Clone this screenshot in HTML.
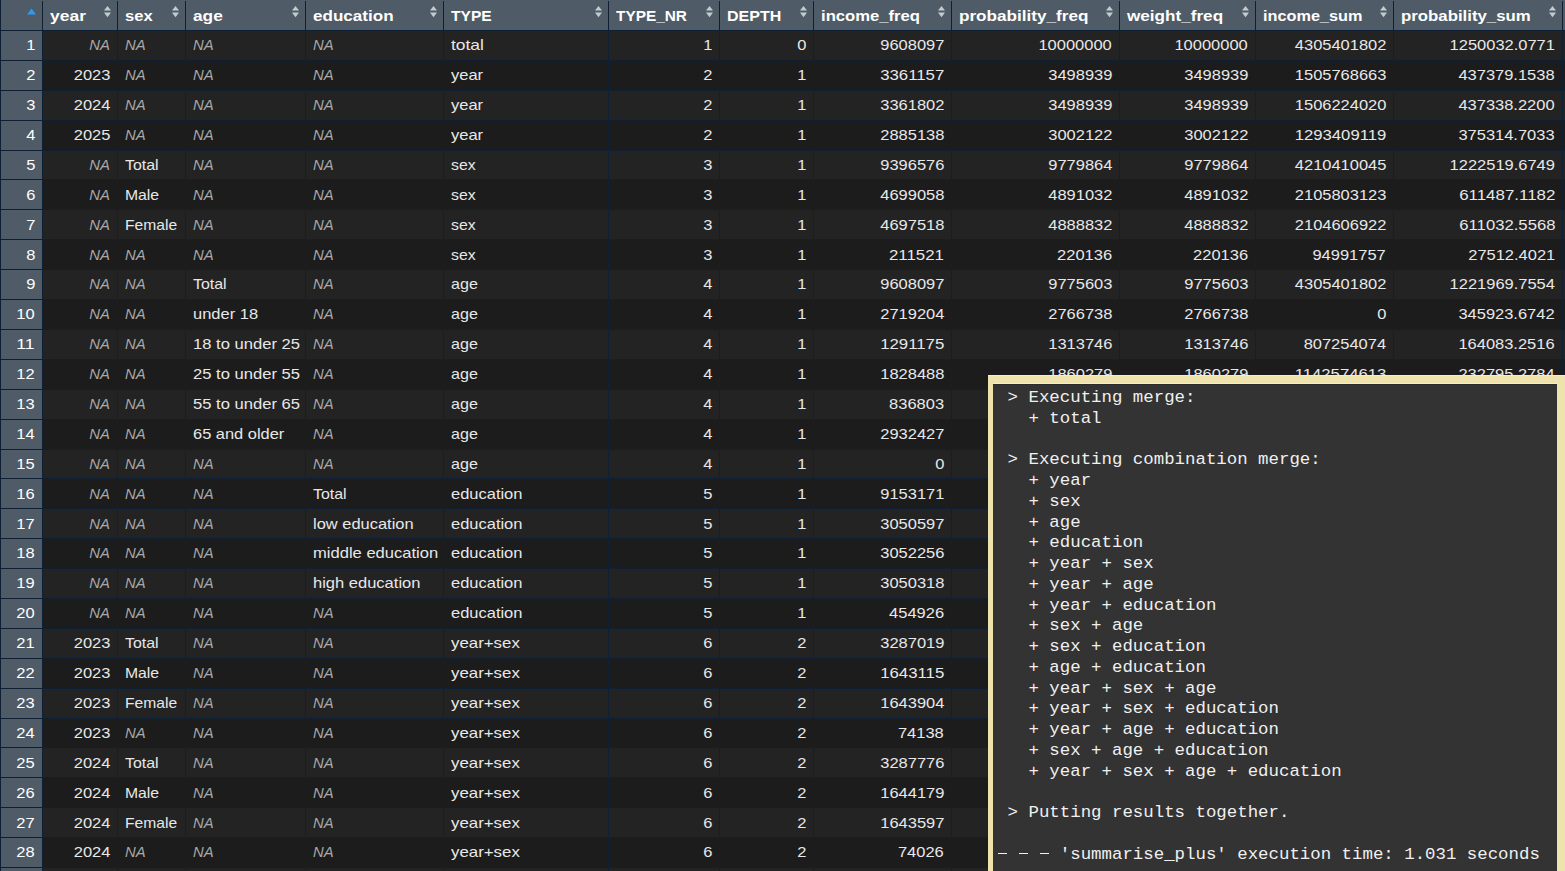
<!DOCTYPE html><html><head><meta charset='utf-8'><style>
*{margin:0;padding:0;box-sizing:border-box}
html,body{width:1565px;height:871px;overflow:hidden;background:#0f2035;}
body{position:relative;font-family:"Liberation Sans", sans-serif;}
.r{position:absolute;}
.t{position:absolute;white-space:pre;line-height:1;font-size:15.0px;color:#e8e8e8;}
.h{position:absolute;white-space:pre;line-height:1;font-size:15.0px;font-weight:bold;color:#ffffff;}
.na{font-style:italic;color:#a8a8a8;}
.rn{position:absolute;white-space:pre;line-height:1;font-size:15.0px;color:#ffffff;}
.con{position:absolute;left:988px;top:375px;width:577px;height:496px;background:#efe3ad;}
.cin{position:absolute;left:5px;top:9px;right:8px;bottom:0;background:#333333;}
.cl{position:absolute;white-space:pre;font-family:"Liberation Mono", monospace;font-size:17.4px;line-height:1;color:#f0f0f0;}
</style></head><body>
<div class='r' style='left:0;top:0;width:1565px;height:30px;background:#4f5b66'></div>
<div class='r' style='left:1px;top:0;width:41px;height:30px;background:#4f5b66'></div>
<div class='r' style='left:43px;top:0;width:74px;height:30px;background:#4f5b66'></div>
<div class='r' style='left:118px;top:0;width:67px;height:30px;background:#4f5b66'></div>
<div class='r' style='left:186px;top:0;width:119px;height:30px;background:#4f5b66'></div>
<div class='r' style='left:306px;top:0;width:137px;height:30px;background:#4f5b66'></div>
<div class='r' style='left:444px;top:0;width:164px;height:30px;background:#4f5b66'></div>
<div class='r' style='left:609px;top:0;width:110px;height:30px;background:#4f5b66'></div>
<div class='r' style='left:720px;top:0;width:93px;height:30px;background:#4f5b66'></div>
<div class='r' style='left:814px;top:0;width:137px;height:30px;background:#4f5b66'></div>
<div class='r' style='left:952px;top:0;width:167px;height:30px;background:#4f5b66'></div>
<div class='r' style='left:1120px;top:0;width:135px;height:30px;background:#4f5b66'></div>
<div class='r' style='left:1256px;top:0;width:137px;height:30px;background:#4f5b66'></div>
<div class='r' style='left:1394px;top:0;width:168px;height:30px;background:#4f5b66'></div>
<div class='r' style='left:1563px;top:0;width:137px;height:30px;background:#4f5b66'></div>
<div class='r' style='left:42px;top:1px;width:1px;height:29px;background:#0f2035'></div>
<div class='r' style='left:117px;top:1px;width:1px;height:29px;background:#0f2035'></div>
<div class='r' style='left:185px;top:1px;width:1px;height:29px;background:#0f2035'></div>
<div class='r' style='left:305px;top:1px;width:1px;height:29px;background:#0f2035'></div>
<div class='r' style='left:443px;top:1px;width:1px;height:29px;background:#0f2035'></div>
<div class='r' style='left:608px;top:1px;width:1px;height:29px;background:#0f2035'></div>
<div class='r' style='left:719px;top:1px;width:1px;height:29px;background:#0f2035'></div>
<div class='r' style='left:813px;top:1px;width:1px;height:29px;background:#0f2035'></div>
<div class='r' style='left:951px;top:1px;width:1px;height:29px;background:#0f2035'></div>
<div class='r' style='left:1119px;top:1px;width:1px;height:29px;background:#0f2035'></div>
<div class='r' style='left:1255px;top:1px;width:1px;height:29px;background:#0f2035'></div>
<div class='r' style='left:1393px;top:1px;width:1px;height:29px;background:#0f2035'></div>
<div class='r' style='left:1562px;top:1px;width:1px;height:29px;background:#0f2035'></div>
<div class='r' style='left:1700px;top:1px;width:1px;height:29px;background:#0f2035'></div>
<div class='r' style='left:0;top:0;width:1px;height:30px;background:#0f2035'></div>
<div class='r' style='left:42px;top:1px;width:1px;height:29px;background:#0f2035'></div>
<div class='r' style='left:117px;top:1px;width:1px;height:29px;background:#0f2035'></div>
<div class='r' style='left:185px;top:1px;width:1px;height:29px;background:#0f2035'></div>
<div class='r' style='left:305px;top:1px;width:1px;height:29px;background:#0f2035'></div>
<div class='r' style='left:443px;top:1px;width:1px;height:29px;background:#0f2035'></div>
<div class='r' style='left:608px;top:1px;width:1px;height:29px;background:#0f2035'></div>
<div class='r' style='left:719px;top:1px;width:1px;height:29px;background:#0f2035'></div>
<div class='r' style='left:813px;top:1px;width:1px;height:29px;background:#0f2035'></div>
<div class='r' style='left:951px;top:1px;width:1px;height:29px;background:#0f2035'></div>
<div class='r' style='left:1119px;top:1px;width:1px;height:29px;background:#0f2035'></div>
<div class='r' style='left:1255px;top:1px;width:1px;height:29px;background:#0f2035'></div>
<div class='r' style='left:1393px;top:1px;width:1px;height:29px;background:#0f2035'></div>
<div class='r' style='left:1562px;top:1px;width:1px;height:29px;background:#0f2035'></div>
<div class='r' style='left:1700px;top:1px;width:1px;height:29px;background:#0f2035'></div>
<div class='r' style='left:1px;top:31px;width:41px;height:29px;background:#4f5b66'></div>
<div class='r' style='left:43px;top:31px;width:74px;height:29px;background:#232323'></div>
<div class='r' style='left:118px;top:31px;width:67px;height:29px;background:#232323'></div>
<div class='r' style='left:186px;top:31px;width:119px;height:29px;background:#232323'></div>
<div class='r' style='left:306px;top:31px;width:137px;height:29px;background:#232323'></div>
<div class='r' style='left:444px;top:31px;width:164px;height:29px;background:#232323'></div>
<div class='r' style='left:609px;top:31px;width:110px;height:29px;background:#232323'></div>
<div class='r' style='left:720px;top:31px;width:93px;height:29px;background:#232323'></div>
<div class='r' style='left:814px;top:31px;width:137px;height:29px;background:#232323'></div>
<div class='r' style='left:952px;top:31px;width:167px;height:29px;background:#232323'></div>
<div class='r' style='left:1120px;top:31px;width:135px;height:29px;background:#232323'></div>
<div class='r' style='left:1256px;top:31px;width:137px;height:29px;background:#232323'></div>
<div class='r' style='left:1394px;top:31px;width:168px;height:29px;background:#232323'></div>
<div class='r' style='left:1563px;top:31px;width:137px;height:29px;background:#232323'></div>
<div class='r' style='left:1px;top:61px;width:41px;height:29px;background:#4f5b66'></div>
<div class='r' style='left:43px;top:61px;width:74px;height:29px;background:#1c1c1c'></div>
<div class='r' style='left:118px;top:61px;width:67px;height:29px;background:#1c1c1c'></div>
<div class='r' style='left:186px;top:61px;width:119px;height:29px;background:#1c1c1c'></div>
<div class='r' style='left:306px;top:61px;width:137px;height:29px;background:#1c1c1c'></div>
<div class='r' style='left:444px;top:61px;width:164px;height:29px;background:#1c1c1c'></div>
<div class='r' style='left:609px;top:61px;width:110px;height:29px;background:#1c1c1c'></div>
<div class='r' style='left:720px;top:61px;width:93px;height:29px;background:#1c1c1c'></div>
<div class='r' style='left:814px;top:61px;width:137px;height:29px;background:#1c1c1c'></div>
<div class='r' style='left:952px;top:61px;width:167px;height:29px;background:#1c1c1c'></div>
<div class='r' style='left:1120px;top:61px;width:135px;height:29px;background:#1c1c1c'></div>
<div class='r' style='left:1256px;top:61px;width:137px;height:29px;background:#1c1c1c'></div>
<div class='r' style='left:1394px;top:61px;width:168px;height:29px;background:#1c1c1c'></div>
<div class='r' style='left:1563px;top:61px;width:137px;height:29px;background:#1c1c1c'></div>
<div class='r' style='left:1px;top:91px;width:41px;height:29px;background:#4f5b66'></div>
<div class='r' style='left:43px;top:91px;width:74px;height:29px;background:#232323'></div>
<div class='r' style='left:118px;top:91px;width:67px;height:29px;background:#232323'></div>
<div class='r' style='left:186px;top:91px;width:119px;height:29px;background:#232323'></div>
<div class='r' style='left:306px;top:91px;width:137px;height:29px;background:#232323'></div>
<div class='r' style='left:444px;top:91px;width:164px;height:29px;background:#232323'></div>
<div class='r' style='left:609px;top:91px;width:110px;height:29px;background:#232323'></div>
<div class='r' style='left:720px;top:91px;width:93px;height:29px;background:#232323'></div>
<div class='r' style='left:814px;top:91px;width:137px;height:29px;background:#232323'></div>
<div class='r' style='left:952px;top:91px;width:167px;height:29px;background:#232323'></div>
<div class='r' style='left:1120px;top:91px;width:135px;height:29px;background:#232323'></div>
<div class='r' style='left:1256px;top:91px;width:137px;height:29px;background:#232323'></div>
<div class='r' style='left:1394px;top:91px;width:168px;height:29px;background:#232323'></div>
<div class='r' style='left:1563px;top:91px;width:137px;height:29px;background:#232323'></div>
<div class='r' style='left:1px;top:121px;width:41px;height:29px;background:#4f5b66'></div>
<div class='r' style='left:43px;top:121px;width:74px;height:29px;background:#1c1c1c'></div>
<div class='r' style='left:118px;top:121px;width:67px;height:29px;background:#1c1c1c'></div>
<div class='r' style='left:186px;top:121px;width:119px;height:29px;background:#1c1c1c'></div>
<div class='r' style='left:306px;top:121px;width:137px;height:29px;background:#1c1c1c'></div>
<div class='r' style='left:444px;top:121px;width:164px;height:29px;background:#1c1c1c'></div>
<div class='r' style='left:609px;top:121px;width:110px;height:29px;background:#1c1c1c'></div>
<div class='r' style='left:720px;top:121px;width:93px;height:29px;background:#1c1c1c'></div>
<div class='r' style='left:814px;top:121px;width:137px;height:29px;background:#1c1c1c'></div>
<div class='r' style='left:952px;top:121px;width:167px;height:29px;background:#1c1c1c'></div>
<div class='r' style='left:1120px;top:121px;width:135px;height:29px;background:#1c1c1c'></div>
<div class='r' style='left:1256px;top:121px;width:137px;height:29px;background:#1c1c1c'></div>
<div class='r' style='left:1394px;top:121px;width:168px;height:29px;background:#1c1c1c'></div>
<div class='r' style='left:1563px;top:121px;width:137px;height:29px;background:#1c1c1c'></div>
<div class='r' style='left:1px;top:151px;width:41px;height:28px;background:#4f5b66'></div>
<div class='r' style='left:43px;top:151px;width:74px;height:28px;background:#232323'></div>
<div class='r' style='left:118px;top:151px;width:67px;height:28px;background:#232323'></div>
<div class='r' style='left:186px;top:151px;width:119px;height:28px;background:#232323'></div>
<div class='r' style='left:306px;top:151px;width:137px;height:28px;background:#232323'></div>
<div class='r' style='left:444px;top:151px;width:164px;height:28px;background:#232323'></div>
<div class='r' style='left:609px;top:151px;width:110px;height:28px;background:#232323'></div>
<div class='r' style='left:720px;top:151px;width:93px;height:28px;background:#232323'></div>
<div class='r' style='left:814px;top:151px;width:137px;height:28px;background:#232323'></div>
<div class='r' style='left:952px;top:151px;width:167px;height:28px;background:#232323'></div>
<div class='r' style='left:1120px;top:151px;width:135px;height:28px;background:#232323'></div>
<div class='r' style='left:1256px;top:151px;width:137px;height:28px;background:#232323'></div>
<div class='r' style='left:1394px;top:151px;width:168px;height:28px;background:#232323'></div>
<div class='r' style='left:1563px;top:151px;width:137px;height:28px;background:#232323'></div>
<div class='r' style='left:1px;top:180px;width:41px;height:29px;background:#4f5b66'></div>
<div class='r' style='left:43px;top:180px;width:74px;height:29px;background:#1c1c1c'></div>
<div class='r' style='left:118px;top:180px;width:67px;height:29px;background:#1c1c1c'></div>
<div class='r' style='left:186px;top:180px;width:119px;height:29px;background:#1c1c1c'></div>
<div class='r' style='left:306px;top:180px;width:137px;height:29px;background:#1c1c1c'></div>
<div class='r' style='left:444px;top:180px;width:164px;height:29px;background:#1c1c1c'></div>
<div class='r' style='left:609px;top:180px;width:110px;height:29px;background:#1c1c1c'></div>
<div class='r' style='left:720px;top:180px;width:93px;height:29px;background:#1c1c1c'></div>
<div class='r' style='left:814px;top:180px;width:137px;height:29px;background:#1c1c1c'></div>
<div class='r' style='left:952px;top:180px;width:167px;height:29px;background:#1c1c1c'></div>
<div class='r' style='left:1120px;top:180px;width:135px;height:29px;background:#1c1c1c'></div>
<div class='r' style='left:1256px;top:180px;width:137px;height:29px;background:#1c1c1c'></div>
<div class='r' style='left:1394px;top:180px;width:168px;height:29px;background:#1c1c1c'></div>
<div class='r' style='left:1563px;top:180px;width:137px;height:29px;background:#1c1c1c'></div>
<div class='r' style='left:1px;top:210px;width:41px;height:29px;background:#4f5b66'></div>
<div class='r' style='left:43px;top:210px;width:74px;height:29px;background:#232323'></div>
<div class='r' style='left:118px;top:210px;width:67px;height:29px;background:#232323'></div>
<div class='r' style='left:186px;top:210px;width:119px;height:29px;background:#232323'></div>
<div class='r' style='left:306px;top:210px;width:137px;height:29px;background:#232323'></div>
<div class='r' style='left:444px;top:210px;width:164px;height:29px;background:#232323'></div>
<div class='r' style='left:609px;top:210px;width:110px;height:29px;background:#232323'></div>
<div class='r' style='left:720px;top:210px;width:93px;height:29px;background:#232323'></div>
<div class='r' style='left:814px;top:210px;width:137px;height:29px;background:#232323'></div>
<div class='r' style='left:952px;top:210px;width:167px;height:29px;background:#232323'></div>
<div class='r' style='left:1120px;top:210px;width:135px;height:29px;background:#232323'></div>
<div class='r' style='left:1256px;top:210px;width:137px;height:29px;background:#232323'></div>
<div class='r' style='left:1394px;top:210px;width:168px;height:29px;background:#232323'></div>
<div class='r' style='left:1563px;top:210px;width:137px;height:29px;background:#232323'></div>
<div class='r' style='left:1px;top:240px;width:41px;height:29px;background:#4f5b66'></div>
<div class='r' style='left:43px;top:240px;width:74px;height:29px;background:#1c1c1c'></div>
<div class='r' style='left:118px;top:240px;width:67px;height:29px;background:#1c1c1c'></div>
<div class='r' style='left:186px;top:240px;width:119px;height:29px;background:#1c1c1c'></div>
<div class='r' style='left:306px;top:240px;width:137px;height:29px;background:#1c1c1c'></div>
<div class='r' style='left:444px;top:240px;width:164px;height:29px;background:#1c1c1c'></div>
<div class='r' style='left:609px;top:240px;width:110px;height:29px;background:#1c1c1c'></div>
<div class='r' style='left:720px;top:240px;width:93px;height:29px;background:#1c1c1c'></div>
<div class='r' style='left:814px;top:240px;width:137px;height:29px;background:#1c1c1c'></div>
<div class='r' style='left:952px;top:240px;width:167px;height:29px;background:#1c1c1c'></div>
<div class='r' style='left:1120px;top:240px;width:135px;height:29px;background:#1c1c1c'></div>
<div class='r' style='left:1256px;top:240px;width:137px;height:29px;background:#1c1c1c'></div>
<div class='r' style='left:1394px;top:240px;width:168px;height:29px;background:#1c1c1c'></div>
<div class='r' style='left:1563px;top:240px;width:137px;height:29px;background:#1c1c1c'></div>
<div class='r' style='left:1px;top:270px;width:41px;height:29px;background:#4f5b66'></div>
<div class='r' style='left:43px;top:270px;width:74px;height:29px;background:#232323'></div>
<div class='r' style='left:118px;top:270px;width:67px;height:29px;background:#232323'></div>
<div class='r' style='left:186px;top:270px;width:119px;height:29px;background:#232323'></div>
<div class='r' style='left:306px;top:270px;width:137px;height:29px;background:#232323'></div>
<div class='r' style='left:444px;top:270px;width:164px;height:29px;background:#232323'></div>
<div class='r' style='left:609px;top:270px;width:110px;height:29px;background:#232323'></div>
<div class='r' style='left:720px;top:270px;width:93px;height:29px;background:#232323'></div>
<div class='r' style='left:814px;top:270px;width:137px;height:29px;background:#232323'></div>
<div class='r' style='left:952px;top:270px;width:167px;height:29px;background:#232323'></div>
<div class='r' style='left:1120px;top:270px;width:135px;height:29px;background:#232323'></div>
<div class='r' style='left:1256px;top:270px;width:137px;height:29px;background:#232323'></div>
<div class='r' style='left:1394px;top:270px;width:168px;height:29px;background:#232323'></div>
<div class='r' style='left:1563px;top:270px;width:137px;height:29px;background:#232323'></div>
<div class='r' style='left:1px;top:300px;width:41px;height:29px;background:#4f5b66'></div>
<div class='r' style='left:43px;top:300px;width:74px;height:29px;background:#1c1c1c'></div>
<div class='r' style='left:118px;top:300px;width:67px;height:29px;background:#1c1c1c'></div>
<div class='r' style='left:186px;top:300px;width:119px;height:29px;background:#1c1c1c'></div>
<div class='r' style='left:306px;top:300px;width:137px;height:29px;background:#1c1c1c'></div>
<div class='r' style='left:444px;top:300px;width:164px;height:29px;background:#1c1c1c'></div>
<div class='r' style='left:609px;top:300px;width:110px;height:29px;background:#1c1c1c'></div>
<div class='r' style='left:720px;top:300px;width:93px;height:29px;background:#1c1c1c'></div>
<div class='r' style='left:814px;top:300px;width:137px;height:29px;background:#1c1c1c'></div>
<div class='r' style='left:952px;top:300px;width:167px;height:29px;background:#1c1c1c'></div>
<div class='r' style='left:1120px;top:300px;width:135px;height:29px;background:#1c1c1c'></div>
<div class='r' style='left:1256px;top:300px;width:137px;height:29px;background:#1c1c1c'></div>
<div class='r' style='left:1394px;top:300px;width:168px;height:29px;background:#1c1c1c'></div>
<div class='r' style='left:1563px;top:300px;width:137px;height:29px;background:#1c1c1c'></div>
<div class='r' style='left:1px;top:330px;width:41px;height:29px;background:#4f5b66'></div>
<div class='r' style='left:43px;top:330px;width:74px;height:29px;background:#232323'></div>
<div class='r' style='left:118px;top:330px;width:67px;height:29px;background:#232323'></div>
<div class='r' style='left:186px;top:330px;width:119px;height:29px;background:#232323'></div>
<div class='r' style='left:306px;top:330px;width:137px;height:29px;background:#232323'></div>
<div class='r' style='left:444px;top:330px;width:164px;height:29px;background:#232323'></div>
<div class='r' style='left:609px;top:330px;width:110px;height:29px;background:#232323'></div>
<div class='r' style='left:720px;top:330px;width:93px;height:29px;background:#232323'></div>
<div class='r' style='left:814px;top:330px;width:137px;height:29px;background:#232323'></div>
<div class='r' style='left:952px;top:330px;width:167px;height:29px;background:#232323'></div>
<div class='r' style='left:1120px;top:330px;width:135px;height:29px;background:#232323'></div>
<div class='r' style='left:1256px;top:330px;width:137px;height:29px;background:#232323'></div>
<div class='r' style='left:1394px;top:330px;width:168px;height:29px;background:#232323'></div>
<div class='r' style='left:1563px;top:330px;width:137px;height:29px;background:#232323'></div>
<div class='r' style='left:1px;top:360px;width:41px;height:29px;background:#4f5b66'></div>
<div class='r' style='left:43px;top:360px;width:74px;height:29px;background:#1c1c1c'></div>
<div class='r' style='left:118px;top:360px;width:67px;height:29px;background:#1c1c1c'></div>
<div class='r' style='left:186px;top:360px;width:119px;height:29px;background:#1c1c1c'></div>
<div class='r' style='left:306px;top:360px;width:137px;height:29px;background:#1c1c1c'></div>
<div class='r' style='left:444px;top:360px;width:164px;height:29px;background:#1c1c1c'></div>
<div class='r' style='left:609px;top:360px;width:110px;height:29px;background:#1c1c1c'></div>
<div class='r' style='left:720px;top:360px;width:93px;height:29px;background:#1c1c1c'></div>
<div class='r' style='left:814px;top:360px;width:137px;height:29px;background:#1c1c1c'></div>
<div class='r' style='left:952px;top:360px;width:167px;height:29px;background:#1c1c1c'></div>
<div class='r' style='left:1120px;top:360px;width:135px;height:29px;background:#1c1c1c'></div>
<div class='r' style='left:1256px;top:360px;width:137px;height:29px;background:#1c1c1c'></div>
<div class='r' style='left:1394px;top:360px;width:168px;height:29px;background:#1c1c1c'></div>
<div class='r' style='left:1563px;top:360px;width:137px;height:29px;background:#1c1c1c'></div>
<div class='r' style='left:1px;top:390px;width:41px;height:29px;background:#4f5b66'></div>
<div class='r' style='left:43px;top:390px;width:74px;height:29px;background:#232323'></div>
<div class='r' style='left:118px;top:390px;width:67px;height:29px;background:#232323'></div>
<div class='r' style='left:186px;top:390px;width:119px;height:29px;background:#232323'></div>
<div class='r' style='left:306px;top:390px;width:137px;height:29px;background:#232323'></div>
<div class='r' style='left:444px;top:390px;width:164px;height:29px;background:#232323'></div>
<div class='r' style='left:609px;top:390px;width:110px;height:29px;background:#232323'></div>
<div class='r' style='left:720px;top:390px;width:93px;height:29px;background:#232323'></div>
<div class='r' style='left:814px;top:390px;width:137px;height:29px;background:#232323'></div>
<div class='r' style='left:952px;top:390px;width:167px;height:29px;background:#232323'></div>
<div class='r' style='left:1120px;top:390px;width:135px;height:29px;background:#232323'></div>
<div class='r' style='left:1256px;top:390px;width:137px;height:29px;background:#232323'></div>
<div class='r' style='left:1394px;top:390px;width:168px;height:29px;background:#232323'></div>
<div class='r' style='left:1563px;top:390px;width:137px;height:29px;background:#232323'></div>
<div class='r' style='left:1px;top:420px;width:41px;height:29px;background:#4f5b66'></div>
<div class='r' style='left:43px;top:420px;width:74px;height:29px;background:#1c1c1c'></div>
<div class='r' style='left:118px;top:420px;width:67px;height:29px;background:#1c1c1c'></div>
<div class='r' style='left:186px;top:420px;width:119px;height:29px;background:#1c1c1c'></div>
<div class='r' style='left:306px;top:420px;width:137px;height:29px;background:#1c1c1c'></div>
<div class='r' style='left:444px;top:420px;width:164px;height:29px;background:#1c1c1c'></div>
<div class='r' style='left:609px;top:420px;width:110px;height:29px;background:#1c1c1c'></div>
<div class='r' style='left:720px;top:420px;width:93px;height:29px;background:#1c1c1c'></div>
<div class='r' style='left:814px;top:420px;width:137px;height:29px;background:#1c1c1c'></div>
<div class='r' style='left:952px;top:420px;width:167px;height:29px;background:#1c1c1c'></div>
<div class='r' style='left:1120px;top:420px;width:135px;height:29px;background:#1c1c1c'></div>
<div class='r' style='left:1256px;top:420px;width:137px;height:29px;background:#1c1c1c'></div>
<div class='r' style='left:1394px;top:420px;width:168px;height:29px;background:#1c1c1c'></div>
<div class='r' style='left:1563px;top:420px;width:137px;height:29px;background:#1c1c1c'></div>
<div class='r' style='left:1px;top:450px;width:41px;height:28px;background:#4f5b66'></div>
<div class='r' style='left:43px;top:450px;width:74px;height:28px;background:#232323'></div>
<div class='r' style='left:118px;top:450px;width:67px;height:28px;background:#232323'></div>
<div class='r' style='left:186px;top:450px;width:119px;height:28px;background:#232323'></div>
<div class='r' style='left:306px;top:450px;width:137px;height:28px;background:#232323'></div>
<div class='r' style='left:444px;top:450px;width:164px;height:28px;background:#232323'></div>
<div class='r' style='left:609px;top:450px;width:110px;height:28px;background:#232323'></div>
<div class='r' style='left:720px;top:450px;width:93px;height:28px;background:#232323'></div>
<div class='r' style='left:814px;top:450px;width:137px;height:28px;background:#232323'></div>
<div class='r' style='left:952px;top:450px;width:167px;height:28px;background:#232323'></div>
<div class='r' style='left:1120px;top:450px;width:135px;height:28px;background:#232323'></div>
<div class='r' style='left:1256px;top:450px;width:137px;height:28px;background:#232323'></div>
<div class='r' style='left:1394px;top:450px;width:168px;height:28px;background:#232323'></div>
<div class='r' style='left:1563px;top:450px;width:137px;height:28px;background:#232323'></div>
<div class='r' style='left:1px;top:479px;width:41px;height:29px;background:#4f5b66'></div>
<div class='r' style='left:43px;top:479px;width:74px;height:29px;background:#1c1c1c'></div>
<div class='r' style='left:118px;top:479px;width:67px;height:29px;background:#1c1c1c'></div>
<div class='r' style='left:186px;top:479px;width:119px;height:29px;background:#1c1c1c'></div>
<div class='r' style='left:306px;top:479px;width:137px;height:29px;background:#1c1c1c'></div>
<div class='r' style='left:444px;top:479px;width:164px;height:29px;background:#1c1c1c'></div>
<div class='r' style='left:609px;top:479px;width:110px;height:29px;background:#1c1c1c'></div>
<div class='r' style='left:720px;top:479px;width:93px;height:29px;background:#1c1c1c'></div>
<div class='r' style='left:814px;top:479px;width:137px;height:29px;background:#1c1c1c'></div>
<div class='r' style='left:952px;top:479px;width:167px;height:29px;background:#1c1c1c'></div>
<div class='r' style='left:1120px;top:479px;width:135px;height:29px;background:#1c1c1c'></div>
<div class='r' style='left:1256px;top:479px;width:137px;height:29px;background:#1c1c1c'></div>
<div class='r' style='left:1394px;top:479px;width:168px;height:29px;background:#1c1c1c'></div>
<div class='r' style='left:1563px;top:479px;width:137px;height:29px;background:#1c1c1c'></div>
<div class='r' style='left:1px;top:509px;width:41px;height:29px;background:#4f5b66'></div>
<div class='r' style='left:43px;top:509px;width:74px;height:29px;background:#232323'></div>
<div class='r' style='left:118px;top:509px;width:67px;height:29px;background:#232323'></div>
<div class='r' style='left:186px;top:509px;width:119px;height:29px;background:#232323'></div>
<div class='r' style='left:306px;top:509px;width:137px;height:29px;background:#232323'></div>
<div class='r' style='left:444px;top:509px;width:164px;height:29px;background:#232323'></div>
<div class='r' style='left:609px;top:509px;width:110px;height:29px;background:#232323'></div>
<div class='r' style='left:720px;top:509px;width:93px;height:29px;background:#232323'></div>
<div class='r' style='left:814px;top:509px;width:137px;height:29px;background:#232323'></div>
<div class='r' style='left:952px;top:509px;width:167px;height:29px;background:#232323'></div>
<div class='r' style='left:1120px;top:509px;width:135px;height:29px;background:#232323'></div>
<div class='r' style='left:1256px;top:509px;width:137px;height:29px;background:#232323'></div>
<div class='r' style='left:1394px;top:509px;width:168px;height:29px;background:#232323'></div>
<div class='r' style='left:1563px;top:509px;width:137px;height:29px;background:#232323'></div>
<div class='r' style='left:1px;top:539px;width:41px;height:29px;background:#4f5b66'></div>
<div class='r' style='left:43px;top:539px;width:74px;height:29px;background:#1c1c1c'></div>
<div class='r' style='left:118px;top:539px;width:67px;height:29px;background:#1c1c1c'></div>
<div class='r' style='left:186px;top:539px;width:119px;height:29px;background:#1c1c1c'></div>
<div class='r' style='left:306px;top:539px;width:137px;height:29px;background:#1c1c1c'></div>
<div class='r' style='left:444px;top:539px;width:164px;height:29px;background:#1c1c1c'></div>
<div class='r' style='left:609px;top:539px;width:110px;height:29px;background:#1c1c1c'></div>
<div class='r' style='left:720px;top:539px;width:93px;height:29px;background:#1c1c1c'></div>
<div class='r' style='left:814px;top:539px;width:137px;height:29px;background:#1c1c1c'></div>
<div class='r' style='left:952px;top:539px;width:167px;height:29px;background:#1c1c1c'></div>
<div class='r' style='left:1120px;top:539px;width:135px;height:29px;background:#1c1c1c'></div>
<div class='r' style='left:1256px;top:539px;width:137px;height:29px;background:#1c1c1c'></div>
<div class='r' style='left:1394px;top:539px;width:168px;height:29px;background:#1c1c1c'></div>
<div class='r' style='left:1563px;top:539px;width:137px;height:29px;background:#1c1c1c'></div>
<div class='r' style='left:1px;top:569px;width:41px;height:29px;background:#4f5b66'></div>
<div class='r' style='left:43px;top:569px;width:74px;height:29px;background:#232323'></div>
<div class='r' style='left:118px;top:569px;width:67px;height:29px;background:#232323'></div>
<div class='r' style='left:186px;top:569px;width:119px;height:29px;background:#232323'></div>
<div class='r' style='left:306px;top:569px;width:137px;height:29px;background:#232323'></div>
<div class='r' style='left:444px;top:569px;width:164px;height:29px;background:#232323'></div>
<div class='r' style='left:609px;top:569px;width:110px;height:29px;background:#232323'></div>
<div class='r' style='left:720px;top:569px;width:93px;height:29px;background:#232323'></div>
<div class='r' style='left:814px;top:569px;width:137px;height:29px;background:#232323'></div>
<div class='r' style='left:952px;top:569px;width:167px;height:29px;background:#232323'></div>
<div class='r' style='left:1120px;top:569px;width:135px;height:29px;background:#232323'></div>
<div class='r' style='left:1256px;top:569px;width:137px;height:29px;background:#232323'></div>
<div class='r' style='left:1394px;top:569px;width:168px;height:29px;background:#232323'></div>
<div class='r' style='left:1563px;top:569px;width:137px;height:29px;background:#232323'></div>
<div class='r' style='left:1px;top:599px;width:41px;height:29px;background:#4f5b66'></div>
<div class='r' style='left:43px;top:599px;width:74px;height:29px;background:#1c1c1c'></div>
<div class='r' style='left:118px;top:599px;width:67px;height:29px;background:#1c1c1c'></div>
<div class='r' style='left:186px;top:599px;width:119px;height:29px;background:#1c1c1c'></div>
<div class='r' style='left:306px;top:599px;width:137px;height:29px;background:#1c1c1c'></div>
<div class='r' style='left:444px;top:599px;width:164px;height:29px;background:#1c1c1c'></div>
<div class='r' style='left:609px;top:599px;width:110px;height:29px;background:#1c1c1c'></div>
<div class='r' style='left:720px;top:599px;width:93px;height:29px;background:#1c1c1c'></div>
<div class='r' style='left:814px;top:599px;width:137px;height:29px;background:#1c1c1c'></div>
<div class='r' style='left:952px;top:599px;width:167px;height:29px;background:#1c1c1c'></div>
<div class='r' style='left:1120px;top:599px;width:135px;height:29px;background:#1c1c1c'></div>
<div class='r' style='left:1256px;top:599px;width:137px;height:29px;background:#1c1c1c'></div>
<div class='r' style='left:1394px;top:599px;width:168px;height:29px;background:#1c1c1c'></div>
<div class='r' style='left:1563px;top:599px;width:137px;height:29px;background:#1c1c1c'></div>
<div class='r' style='left:1px;top:629px;width:41px;height:29px;background:#4f5b66'></div>
<div class='r' style='left:43px;top:629px;width:74px;height:29px;background:#232323'></div>
<div class='r' style='left:118px;top:629px;width:67px;height:29px;background:#232323'></div>
<div class='r' style='left:186px;top:629px;width:119px;height:29px;background:#232323'></div>
<div class='r' style='left:306px;top:629px;width:137px;height:29px;background:#232323'></div>
<div class='r' style='left:444px;top:629px;width:164px;height:29px;background:#232323'></div>
<div class='r' style='left:609px;top:629px;width:110px;height:29px;background:#232323'></div>
<div class='r' style='left:720px;top:629px;width:93px;height:29px;background:#232323'></div>
<div class='r' style='left:814px;top:629px;width:137px;height:29px;background:#232323'></div>
<div class='r' style='left:952px;top:629px;width:167px;height:29px;background:#232323'></div>
<div class='r' style='left:1120px;top:629px;width:135px;height:29px;background:#232323'></div>
<div class='r' style='left:1256px;top:629px;width:137px;height:29px;background:#232323'></div>
<div class='r' style='left:1394px;top:629px;width:168px;height:29px;background:#232323'></div>
<div class='r' style='left:1563px;top:629px;width:137px;height:29px;background:#232323'></div>
<div class='r' style='left:1px;top:659px;width:41px;height:29px;background:#4f5b66'></div>
<div class='r' style='left:43px;top:659px;width:74px;height:29px;background:#1c1c1c'></div>
<div class='r' style='left:118px;top:659px;width:67px;height:29px;background:#1c1c1c'></div>
<div class='r' style='left:186px;top:659px;width:119px;height:29px;background:#1c1c1c'></div>
<div class='r' style='left:306px;top:659px;width:137px;height:29px;background:#1c1c1c'></div>
<div class='r' style='left:444px;top:659px;width:164px;height:29px;background:#1c1c1c'></div>
<div class='r' style='left:609px;top:659px;width:110px;height:29px;background:#1c1c1c'></div>
<div class='r' style='left:720px;top:659px;width:93px;height:29px;background:#1c1c1c'></div>
<div class='r' style='left:814px;top:659px;width:137px;height:29px;background:#1c1c1c'></div>
<div class='r' style='left:952px;top:659px;width:167px;height:29px;background:#1c1c1c'></div>
<div class='r' style='left:1120px;top:659px;width:135px;height:29px;background:#1c1c1c'></div>
<div class='r' style='left:1256px;top:659px;width:137px;height:29px;background:#1c1c1c'></div>
<div class='r' style='left:1394px;top:659px;width:168px;height:29px;background:#1c1c1c'></div>
<div class='r' style='left:1563px;top:659px;width:137px;height:29px;background:#1c1c1c'></div>
<div class='r' style='left:1px;top:689px;width:41px;height:29px;background:#4f5b66'></div>
<div class='r' style='left:43px;top:689px;width:74px;height:29px;background:#232323'></div>
<div class='r' style='left:118px;top:689px;width:67px;height:29px;background:#232323'></div>
<div class='r' style='left:186px;top:689px;width:119px;height:29px;background:#232323'></div>
<div class='r' style='left:306px;top:689px;width:137px;height:29px;background:#232323'></div>
<div class='r' style='left:444px;top:689px;width:164px;height:29px;background:#232323'></div>
<div class='r' style='left:609px;top:689px;width:110px;height:29px;background:#232323'></div>
<div class='r' style='left:720px;top:689px;width:93px;height:29px;background:#232323'></div>
<div class='r' style='left:814px;top:689px;width:137px;height:29px;background:#232323'></div>
<div class='r' style='left:952px;top:689px;width:167px;height:29px;background:#232323'></div>
<div class='r' style='left:1120px;top:689px;width:135px;height:29px;background:#232323'></div>
<div class='r' style='left:1256px;top:689px;width:137px;height:29px;background:#232323'></div>
<div class='r' style='left:1394px;top:689px;width:168px;height:29px;background:#232323'></div>
<div class='r' style='left:1563px;top:689px;width:137px;height:29px;background:#232323'></div>
<div class='r' style='left:1px;top:719px;width:41px;height:28px;background:#4f5b66'></div>
<div class='r' style='left:43px;top:719px;width:74px;height:28px;background:#1c1c1c'></div>
<div class='r' style='left:118px;top:719px;width:67px;height:28px;background:#1c1c1c'></div>
<div class='r' style='left:186px;top:719px;width:119px;height:28px;background:#1c1c1c'></div>
<div class='r' style='left:306px;top:719px;width:137px;height:28px;background:#1c1c1c'></div>
<div class='r' style='left:444px;top:719px;width:164px;height:28px;background:#1c1c1c'></div>
<div class='r' style='left:609px;top:719px;width:110px;height:28px;background:#1c1c1c'></div>
<div class='r' style='left:720px;top:719px;width:93px;height:28px;background:#1c1c1c'></div>
<div class='r' style='left:814px;top:719px;width:137px;height:28px;background:#1c1c1c'></div>
<div class='r' style='left:952px;top:719px;width:167px;height:28px;background:#1c1c1c'></div>
<div class='r' style='left:1120px;top:719px;width:135px;height:28px;background:#1c1c1c'></div>
<div class='r' style='left:1256px;top:719px;width:137px;height:28px;background:#1c1c1c'></div>
<div class='r' style='left:1394px;top:719px;width:168px;height:28px;background:#1c1c1c'></div>
<div class='r' style='left:1563px;top:719px;width:137px;height:28px;background:#1c1c1c'></div>
<div class='r' style='left:1px;top:748px;width:41px;height:29px;background:#4f5b66'></div>
<div class='r' style='left:43px;top:748px;width:74px;height:29px;background:#232323'></div>
<div class='r' style='left:118px;top:748px;width:67px;height:29px;background:#232323'></div>
<div class='r' style='left:186px;top:748px;width:119px;height:29px;background:#232323'></div>
<div class='r' style='left:306px;top:748px;width:137px;height:29px;background:#232323'></div>
<div class='r' style='left:444px;top:748px;width:164px;height:29px;background:#232323'></div>
<div class='r' style='left:609px;top:748px;width:110px;height:29px;background:#232323'></div>
<div class='r' style='left:720px;top:748px;width:93px;height:29px;background:#232323'></div>
<div class='r' style='left:814px;top:748px;width:137px;height:29px;background:#232323'></div>
<div class='r' style='left:952px;top:748px;width:167px;height:29px;background:#232323'></div>
<div class='r' style='left:1120px;top:748px;width:135px;height:29px;background:#232323'></div>
<div class='r' style='left:1256px;top:748px;width:137px;height:29px;background:#232323'></div>
<div class='r' style='left:1394px;top:748px;width:168px;height:29px;background:#232323'></div>
<div class='r' style='left:1563px;top:748px;width:137px;height:29px;background:#232323'></div>
<div class='r' style='left:1px;top:778px;width:41px;height:29px;background:#4f5b66'></div>
<div class='r' style='left:43px;top:778px;width:74px;height:29px;background:#1c1c1c'></div>
<div class='r' style='left:118px;top:778px;width:67px;height:29px;background:#1c1c1c'></div>
<div class='r' style='left:186px;top:778px;width:119px;height:29px;background:#1c1c1c'></div>
<div class='r' style='left:306px;top:778px;width:137px;height:29px;background:#1c1c1c'></div>
<div class='r' style='left:444px;top:778px;width:164px;height:29px;background:#1c1c1c'></div>
<div class='r' style='left:609px;top:778px;width:110px;height:29px;background:#1c1c1c'></div>
<div class='r' style='left:720px;top:778px;width:93px;height:29px;background:#1c1c1c'></div>
<div class='r' style='left:814px;top:778px;width:137px;height:29px;background:#1c1c1c'></div>
<div class='r' style='left:952px;top:778px;width:167px;height:29px;background:#1c1c1c'></div>
<div class='r' style='left:1120px;top:778px;width:135px;height:29px;background:#1c1c1c'></div>
<div class='r' style='left:1256px;top:778px;width:137px;height:29px;background:#1c1c1c'></div>
<div class='r' style='left:1394px;top:778px;width:168px;height:29px;background:#1c1c1c'></div>
<div class='r' style='left:1563px;top:778px;width:137px;height:29px;background:#1c1c1c'></div>
<div class='r' style='left:1px;top:808px;width:41px;height:29px;background:#4f5b66'></div>
<div class='r' style='left:43px;top:808px;width:74px;height:29px;background:#232323'></div>
<div class='r' style='left:118px;top:808px;width:67px;height:29px;background:#232323'></div>
<div class='r' style='left:186px;top:808px;width:119px;height:29px;background:#232323'></div>
<div class='r' style='left:306px;top:808px;width:137px;height:29px;background:#232323'></div>
<div class='r' style='left:444px;top:808px;width:164px;height:29px;background:#232323'></div>
<div class='r' style='left:609px;top:808px;width:110px;height:29px;background:#232323'></div>
<div class='r' style='left:720px;top:808px;width:93px;height:29px;background:#232323'></div>
<div class='r' style='left:814px;top:808px;width:137px;height:29px;background:#232323'></div>
<div class='r' style='left:952px;top:808px;width:167px;height:29px;background:#232323'></div>
<div class='r' style='left:1120px;top:808px;width:135px;height:29px;background:#232323'></div>
<div class='r' style='left:1256px;top:808px;width:137px;height:29px;background:#232323'></div>
<div class='r' style='left:1394px;top:808px;width:168px;height:29px;background:#232323'></div>
<div class='r' style='left:1563px;top:808px;width:137px;height:29px;background:#232323'></div>
<div class='r' style='left:1px;top:838px;width:41px;height:29px;background:#4f5b66'></div>
<div class='r' style='left:43px;top:838px;width:74px;height:29px;background:#1c1c1c'></div>
<div class='r' style='left:118px;top:838px;width:67px;height:29px;background:#1c1c1c'></div>
<div class='r' style='left:186px;top:838px;width:119px;height:29px;background:#1c1c1c'></div>
<div class='r' style='left:306px;top:838px;width:137px;height:29px;background:#1c1c1c'></div>
<div class='r' style='left:444px;top:838px;width:164px;height:29px;background:#1c1c1c'></div>
<div class='r' style='left:609px;top:838px;width:110px;height:29px;background:#1c1c1c'></div>
<div class='r' style='left:720px;top:838px;width:93px;height:29px;background:#1c1c1c'></div>
<div class='r' style='left:814px;top:838px;width:137px;height:29px;background:#1c1c1c'></div>
<div class='r' style='left:952px;top:838px;width:167px;height:29px;background:#1c1c1c'></div>
<div class='r' style='left:1120px;top:838px;width:135px;height:29px;background:#1c1c1c'></div>
<div class='r' style='left:1256px;top:838px;width:137px;height:29px;background:#1c1c1c'></div>
<div class='r' style='left:1394px;top:838px;width:168px;height:29px;background:#1c1c1c'></div>
<div class='r' style='left:1563px;top:838px;width:137px;height:29px;background:#1c1c1c'></div>
<div class='r' style='left:1px;top:868px;width:41px;height:29px;background:#4f5b66'></div>
<div class='r' style='left:43px;top:868px;width:74px;height:29px;background:#232323'></div>
<div class='r' style='left:118px;top:868px;width:67px;height:29px;background:#232323'></div>
<div class='r' style='left:186px;top:868px;width:119px;height:29px;background:#232323'></div>
<div class='r' style='left:306px;top:868px;width:137px;height:29px;background:#232323'></div>
<div class='r' style='left:444px;top:868px;width:164px;height:29px;background:#232323'></div>
<div class='r' style='left:609px;top:868px;width:110px;height:29px;background:#232323'></div>
<div class='r' style='left:720px;top:868px;width:93px;height:29px;background:#232323'></div>
<div class='r' style='left:814px;top:868px;width:137px;height:29px;background:#232323'></div>
<div class='r' style='left:952px;top:868px;width:167px;height:29px;background:#232323'></div>
<div class='r' style='left:1120px;top:868px;width:135px;height:29px;background:#232323'></div>
<div class='r' style='left:1256px;top:868px;width:137px;height:29px;background:#232323'></div>
<div class='r' style='left:1394px;top:868px;width:168px;height:29px;background:#232323'></div>
<div class='r' style='left:1563px;top:868px;width:137px;height:29px;background:#232323'></div>
<div class='h' style='left:50px;top:8.42px;transform:scaleX(1.1655);transform-origin:0 0'>year</div>
<div class='h' style='left:125px;top:8.42px;transform:scaleX(1.1038);transform-origin:0 0'>sex</div>
<div class='h' style='left:193px;top:8.42px;transform:scaleX(1.1526);transform-origin:0 0'>age</div>
<div class='h' style='left:313px;top:8.42px;transform:scaleX(1.1370);transform-origin:0 0'>education</div>
<div class='h' style='left:451px;top:8.42px;transform:scaleX(1.0373);transform-origin:0 0'>TYPE</div>
<div class='h' style='left:616px;top:8.42px;transform:scaleX(1.0259);transform-origin:0 0'>TYPE_NR</div>
<div class='h' style='left:727px;top:8.42px;transform:scaleX(1.0665);transform-origin:0 0'>DEPTH</div>
<div class='h' style='left:821px;top:8.42px;transform:scaleX(1.1103);transform-origin:0 0'>income_freq</div>
<div class='h' style='left:959px;top:8.42px;transform:scaleX(1.1412);transform-origin:0 0'>probability_freq</div>
<div class='h' style='left:1127px;top:8.42px;transform:scaleX(1.1415);transform-origin:0 0'>weight_freq</div>
<div class='h' style='left:1263px;top:8.42px;transform:scaleX(1.0842);transform-origin:0 0'>income_sum</div>
<div class='h' style='left:1401px;top:8.42px;transform:scaleX(1.1199);transform-origin:0 0'>probability_sum</div>
<svg class='r' style='left:0;top:0' width='1565' height='30' viewBox='0 0 1565 30'><polygon points='104,10.6 111,10.6 107.5,6' fill='#c5cad0'/><polygon points='104,12.6 111,12.6 107.5,17.2' fill='#c5cad0'/><polygon points='172,10.6 179,10.6 175.5,6' fill='#c5cad0'/><polygon points='172,12.6 179,12.6 175.5,17.2' fill='#c5cad0'/><polygon points='292,10.6 299,10.6 295.5,6' fill='#c5cad0'/><polygon points='292,12.6 299,12.6 295.5,17.2' fill='#c5cad0'/><polygon points='430,10.6 437,10.6 433.5,6' fill='#c5cad0'/><polygon points='430,12.6 437,12.6 433.5,17.2' fill='#c5cad0'/><polygon points='595,10.6 602,10.6 598.5,6' fill='#c5cad0'/><polygon points='595,12.6 602,12.6 598.5,17.2' fill='#c5cad0'/><polygon points='706,10.6 713,10.6 709.5,6' fill='#c5cad0'/><polygon points='706,12.6 713,12.6 709.5,17.2' fill='#c5cad0'/><polygon points='800,10.6 807,10.6 803.5,6' fill='#c5cad0'/><polygon points='800,12.6 807,12.6 803.5,17.2' fill='#c5cad0'/><polygon points='938,10.6 945,10.6 941.5,6' fill='#c5cad0'/><polygon points='938,12.6 945,12.6 941.5,17.2' fill='#c5cad0'/><polygon points='1106,10.6 1113,10.6 1109.5,6' fill='#c5cad0'/><polygon points='1106,12.6 1113,12.6 1109.5,17.2' fill='#c5cad0'/><polygon points='1242,10.6 1249,10.6 1245.5,6' fill='#c5cad0'/><polygon points='1242,12.6 1249,12.6 1245.5,17.2' fill='#c5cad0'/><polygon points='1380,10.6 1387,10.6 1383.5,6' fill='#c5cad0'/><polygon points='1380,12.6 1387,12.6 1383.5,17.2' fill='#c5cad0'/><polygon points='1549,10.6 1556,10.6 1552.5,6' fill='#c5cad0'/><polygon points='1549,12.6 1556,12.6 1552.5,17.2' fill='#c5cad0'/><polygon points='27,14.4 36,14.4 31.5,8.6' fill='#2b9af3'/></svg>
<div class='rn' style='right:1530px;top:37.42px;transform:scaleX(1.0982);transform-origin:100% 0'>1</div>
<div class='t na' style='right:1455px;top:37.42px;transform:scaleX(0.9896);transform-origin:100% 0'>NA</div>
<div class='t na' style='left:124.5px;top:37.42px;transform:scaleX(0.9896);transform-origin:0 0'>NA</div>
<div class='t na' style='left:192.5px;top:37.42px;transform:scaleX(0.9896);transform-origin:0 0'>NA</div>
<div class='t na' style='left:312.5px;top:37.42px;transform:scaleX(0.9896);transform-origin:0 0'>NA</div>
<div class='t' style='left:450.5px;top:37.42px;transform:scaleX(1.1614);transform-origin:0 0'>total</div>
<div class='t' style='right:853px;top:37.42px;transform:scaleX(1.0982);transform-origin:100% 0'>1</div>
<div class='t' style='right:759px;top:37.42px;transform:scaleX(1.0982);transform-origin:100% 0'>0</div>
<div class='t' style='right:621px;top:37.42px;transform:scaleX(1.0982);transform-origin:100% 0'>9608097</div>
<div class='t' style='right:453px;top:37.42px;transform:scaleX(1.0982);transform-origin:100% 0'>10000000</div>
<div class='t' style='right:317px;top:37.42px;transform:scaleX(1.0982);transform-origin:100% 0'>10000000</div>
<div class='t' style='right:179px;top:37.42px;transform:scaleX(1.0982);transform-origin:100% 0'>4305401802</div>
<div class='t' style='right:10px;top:37.42px;transform:scaleX(1.0982);transform-origin:100% 0'>1250032.0771</div>
<div class='rn' style='right:1530px;top:67.42px;transform:scaleX(1.0982);transform-origin:100% 0'>2</div>
<div class='t' style='right:1455px;top:67.42px;transform:scaleX(1.0982);transform-origin:100% 0'>2023</div>
<div class='t na' style='left:124.5px;top:67.42px;transform:scaleX(0.9896);transform-origin:0 0'>NA</div>
<div class='t na' style='left:192.5px;top:67.42px;transform:scaleX(0.9896);transform-origin:0 0'>NA</div>
<div class='t na' style='left:312.5px;top:67.42px;transform:scaleX(0.9896);transform-origin:0 0'>NA</div>
<div class='t' style='left:450.5px;top:67.42px;transform:scaleX(1.1009);transform-origin:0 0'>year</div>
<div class='t' style='right:853px;top:67.42px;transform:scaleX(1.0982);transform-origin:100% 0'>2</div>
<div class='t' style='right:759px;top:67.42px;transform:scaleX(1.0982);transform-origin:100% 0'>1</div>
<div class='t' style='right:621px;top:67.42px;transform:scaleX(1.1196);transform-origin:100% 0'>3361157</div>
<div class='t' style='right:453px;top:67.42px;transform:scaleX(1.0982);transform-origin:100% 0'>3498939</div>
<div class='t' style='right:317px;top:67.42px;transform:scaleX(1.0982);transform-origin:100% 0'>3498939</div>
<div class='t' style='right:179px;top:67.42px;transform:scaleX(1.0982);transform-origin:100% 0'>1505768663</div>
<div class='t' style='right:10px;top:67.42px;transform:scaleX(1.0982);transform-origin:100% 0'>437379.1538</div>
<div class='rn' style='right:1530px;top:97.42px;transform:scaleX(1.0982);transform-origin:100% 0'>3</div>
<div class='t' style='right:1455px;top:97.42px;transform:scaleX(1.0982);transform-origin:100% 0'>2024</div>
<div class='t na' style='left:124.5px;top:97.42px;transform:scaleX(0.9896);transform-origin:0 0'>NA</div>
<div class='t na' style='left:192.5px;top:97.42px;transform:scaleX(0.9896);transform-origin:0 0'>NA</div>
<div class='t na' style='left:312.5px;top:97.42px;transform:scaleX(0.9896);transform-origin:0 0'>NA</div>
<div class='t' style='left:450.5px;top:97.42px;transform:scaleX(1.1009);transform-origin:0 0'>year</div>
<div class='t' style='right:853px;top:97.42px;transform:scaleX(1.0982);transform-origin:100% 0'>2</div>
<div class='t' style='right:759px;top:97.42px;transform:scaleX(1.0982);transform-origin:100% 0'>1</div>
<div class='t' style='right:621px;top:97.42px;transform:scaleX(1.0982);transform-origin:100% 0'>3361802</div>
<div class='t' style='right:453px;top:97.42px;transform:scaleX(1.0982);transform-origin:100% 0'>3498939</div>
<div class='t' style='right:317px;top:97.42px;transform:scaleX(1.0982);transform-origin:100% 0'>3498939</div>
<div class='t' style='right:179px;top:97.42px;transform:scaleX(1.0982);transform-origin:100% 0'>1506224020</div>
<div class='t' style='right:10px;top:97.42px;transform:scaleX(1.0982);transform-origin:100% 0'>437338.2200</div>
<div class='rn' style='right:1530px;top:127.42px;transform:scaleX(1.0982);transform-origin:100% 0'>4</div>
<div class='t' style='right:1455px;top:127.42px;transform:scaleX(1.0982);transform-origin:100% 0'>2025</div>
<div class='t na' style='left:124.5px;top:127.42px;transform:scaleX(0.9896);transform-origin:0 0'>NA</div>
<div class='t na' style='left:192.5px;top:127.42px;transform:scaleX(0.9896);transform-origin:0 0'>NA</div>
<div class='t na' style='left:312.5px;top:127.42px;transform:scaleX(0.9896);transform-origin:0 0'>NA</div>
<div class='t' style='left:450.5px;top:127.42px;transform:scaleX(1.1009);transform-origin:0 0'>year</div>
<div class='t' style='right:853px;top:127.42px;transform:scaleX(1.0982);transform-origin:100% 0'>2</div>
<div class='t' style='right:759px;top:127.42px;transform:scaleX(1.0982);transform-origin:100% 0'>1</div>
<div class='t' style='right:621px;top:127.42px;transform:scaleX(1.0982);transform-origin:100% 0'>2885138</div>
<div class='t' style='right:453px;top:127.42px;transform:scaleX(1.0982);transform-origin:100% 0'>3002122</div>
<div class='t' style='right:317px;top:127.42px;transform:scaleX(1.0982);transform-origin:100% 0'>3002122</div>
<div class='t' style='right:179px;top:127.42px;transform:scaleX(1.1131);transform-origin:100% 0'>1293409119</div>
<div class='t' style='right:10px;top:127.42px;transform:scaleX(1.0982);transform-origin:100% 0'>375314.7033</div>
<div class='rn' style='right:1530px;top:157.43px;transform:scaleX(1.0982);transform-origin:100% 0'>5</div>
<div class='t na' style='right:1455px;top:157.43px;transform:scaleX(0.9896);transform-origin:100% 0'>NA</div>
<div class='t' style='left:124.5px;top:157.43px;transform:scaleX(1.0614);transform-origin:0 0'>Total</div>
<div class='t na' style='left:192.5px;top:157.43px;transform:scaleX(0.9896);transform-origin:0 0'>NA</div>
<div class='t na' style='left:312.5px;top:157.43px;transform:scaleX(0.9896);transform-origin:0 0'>NA</div>
<div class='t' style='left:450.5px;top:157.43px;transform:scaleX(1.0552);transform-origin:0 0'>sex</div>
<div class='t' style='right:853px;top:157.43px;transform:scaleX(1.0982);transform-origin:100% 0'>3</div>
<div class='t' style='right:759px;top:157.43px;transform:scaleX(1.0982);transform-origin:100% 0'>1</div>
<div class='t' style='right:621px;top:157.43px;transform:scaleX(1.0982);transform-origin:100% 0'>9396576</div>
<div class='t' style='right:453px;top:157.43px;transform:scaleX(1.0982);transform-origin:100% 0'>9779864</div>
<div class='t' style='right:317px;top:157.43px;transform:scaleX(1.0982);transform-origin:100% 0'>9779864</div>
<div class='t' style='right:179px;top:157.43px;transform:scaleX(1.0982);transform-origin:100% 0'>4210410045</div>
<div class='t' style='right:10px;top:157.43px;transform:scaleX(1.0982);transform-origin:100% 0'>1222519.6749</div>
<div class='rn' style='right:1530px;top:187.43px;transform:scaleX(1.0982);transform-origin:100% 0'>6</div>
<div class='t na' style='right:1455px;top:187.43px;transform:scaleX(0.9896);transform-origin:100% 0'>NA</div>
<div class='t' style='left:124.5px;top:187.43px;transform:scaleX(1.0491);transform-origin:0 0'>Male</div>
<div class='t na' style='left:192.5px;top:187.43px;transform:scaleX(0.9896);transform-origin:0 0'>NA</div>
<div class='t na' style='left:312.5px;top:187.43px;transform:scaleX(0.9896);transform-origin:0 0'>NA</div>
<div class='t' style='left:450.5px;top:187.43px;transform:scaleX(1.0552);transform-origin:0 0'>sex</div>
<div class='t' style='right:853px;top:187.43px;transform:scaleX(1.0982);transform-origin:100% 0'>3</div>
<div class='t' style='right:759px;top:187.43px;transform:scaleX(1.0982);transform-origin:100% 0'>1</div>
<div class='t' style='right:621px;top:187.43px;transform:scaleX(1.0982);transform-origin:100% 0'>4699058</div>
<div class='t' style='right:453px;top:187.43px;transform:scaleX(1.0982);transform-origin:100% 0'>4891032</div>
<div class='t' style='right:317px;top:187.43px;transform:scaleX(1.0982);transform-origin:100% 0'>4891032</div>
<div class='t' style='right:179px;top:187.43px;transform:scaleX(1.0982);transform-origin:100% 0'>2105803123</div>
<div class='t' style='right:10px;top:187.43px;transform:scaleX(1.1269);transform-origin:100% 0'>611487.1182</div>
<div class='rn' style='right:1530px;top:217.43px;transform:scaleX(1.0982);transform-origin:100% 0'>7</div>
<div class='t na' style='right:1455px;top:217.43px;transform:scaleX(0.9896);transform-origin:100% 0'>NA</div>
<div class='t' style='left:124.5px;top:217.43px;transform:scaleX(1.0409);transform-origin:0 0'>Female</div>
<div class='t na' style='left:192.5px;top:217.43px;transform:scaleX(0.9896);transform-origin:0 0'>NA</div>
<div class='t na' style='left:312.5px;top:217.43px;transform:scaleX(0.9896);transform-origin:0 0'>NA</div>
<div class='t' style='left:450.5px;top:217.43px;transform:scaleX(1.0552);transform-origin:0 0'>sex</div>
<div class='t' style='right:853px;top:217.43px;transform:scaleX(1.0982);transform-origin:100% 0'>3</div>
<div class='t' style='right:759px;top:217.43px;transform:scaleX(1.0982);transform-origin:100% 0'>1</div>
<div class='t' style='right:621px;top:217.43px;transform:scaleX(1.0982);transform-origin:100% 0'>4697518</div>
<div class='t' style='right:453px;top:217.43px;transform:scaleX(1.0982);transform-origin:100% 0'>4888832</div>
<div class='t' style='right:317px;top:217.43px;transform:scaleX(1.0982);transform-origin:100% 0'>4888832</div>
<div class='t' style='right:179px;top:217.43px;transform:scaleX(1.0982);transform-origin:100% 0'>2104606922</div>
<div class='t' style='right:10px;top:217.43px;transform:scaleX(1.1124);transform-origin:100% 0'>611032.5568</div>
<div class='rn' style='right:1530px;top:247.43px;transform:scaleX(1.0982);transform-origin:100% 0'>8</div>
<div class='t na' style='right:1455px;top:247.43px;transform:scaleX(0.9896);transform-origin:100% 0'>NA</div>
<div class='t na' style='left:124.5px;top:247.43px;transform:scaleX(0.9896);transform-origin:0 0'>NA</div>
<div class='t na' style='left:192.5px;top:247.43px;transform:scaleX(0.9896);transform-origin:0 0'>NA</div>
<div class='t na' style='left:312.5px;top:247.43px;transform:scaleX(0.9896);transform-origin:0 0'>NA</div>
<div class='t' style='left:450.5px;top:247.43px;transform:scaleX(1.0552);transform-origin:0 0'>sex</div>
<div class='t' style='right:853px;top:247.43px;transform:scaleX(1.0982);transform-origin:100% 0'>3</div>
<div class='t' style='right:759px;top:247.43px;transform:scaleX(1.0982);transform-origin:100% 0'>1</div>
<div class='t' style='right:621px;top:247.43px;transform:scaleX(1.1232);transform-origin:100% 0'>211521</div>
<div class='t' style='right:453px;top:247.43px;transform:scaleX(1.0982);transform-origin:100% 0'>220136</div>
<div class='t' style='right:317px;top:247.43px;transform:scaleX(1.0982);transform-origin:100% 0'>220136</div>
<div class='t' style='right:179px;top:247.43px;transform:scaleX(1.0982);transform-origin:100% 0'>94991757</div>
<div class='t' style='right:10px;top:247.43px;transform:scaleX(1.0982);transform-origin:100% 0'>27512.4021</div>
<div class='rn' style='right:1530px;top:276.43px;transform:scaleX(1.0982);transform-origin:100% 0'>9</div>
<div class='t na' style='right:1455px;top:276.43px;transform:scaleX(0.9896);transform-origin:100% 0'>NA</div>
<div class='t na' style='left:124.5px;top:276.43px;transform:scaleX(0.9896);transform-origin:0 0'>NA</div>
<div class='t' style='left:192.5px;top:276.43px;transform:scaleX(1.0614);transform-origin:0 0'>Total</div>
<div class='t na' style='left:312.5px;top:276.43px;transform:scaleX(0.9896);transform-origin:0 0'>NA</div>
<div class='t' style='left:450.5px;top:276.43px;transform:scaleX(1.0718);transform-origin:0 0'>age</div>
<div class='t' style='right:853px;top:276.43px;transform:scaleX(1.0982);transform-origin:100% 0'>4</div>
<div class='t' style='right:759px;top:276.43px;transform:scaleX(1.0982);transform-origin:100% 0'>1</div>
<div class='t' style='right:621px;top:276.43px;transform:scaleX(1.0982);transform-origin:100% 0'>9608097</div>
<div class='t' style='right:453px;top:276.43px;transform:scaleX(1.0982);transform-origin:100% 0'>9775603</div>
<div class='t' style='right:317px;top:276.43px;transform:scaleX(1.0982);transform-origin:100% 0'>9775603</div>
<div class='t' style='right:179px;top:276.43px;transform:scaleX(1.0982);transform-origin:100% 0'>4305401802</div>
<div class='t' style='right:10px;top:276.43px;transform:scaleX(1.0982);transform-origin:100% 0'>1221969.7554</div>
<div class='rn' style='right:1530px;top:306.43px;transform:scaleX(1.0982);transform-origin:100% 0'>10</div>
<div class='t na' style='right:1455px;top:306.43px;transform:scaleX(0.9896);transform-origin:100% 0'>NA</div>
<div class='t na' style='left:124.5px;top:306.43px;transform:scaleX(0.9896);transform-origin:0 0'>NA</div>
<div class='t' style='left:192.5px;top:306.43px;transform:scaleX(1.0989);transform-origin:0 0'>under 18</div>
<div class='t na' style='left:312.5px;top:306.43px;transform:scaleX(0.9896);transform-origin:0 0'>NA</div>
<div class='t' style='left:450.5px;top:306.43px;transform:scaleX(1.0718);transform-origin:0 0'>age</div>
<div class='t' style='right:853px;top:306.43px;transform:scaleX(1.0982);transform-origin:100% 0'>4</div>
<div class='t' style='right:759px;top:306.43px;transform:scaleX(1.0982);transform-origin:100% 0'>1</div>
<div class='t' style='right:621px;top:306.43px;transform:scaleX(1.0982);transform-origin:100% 0'>2719204</div>
<div class='t' style='right:453px;top:306.43px;transform:scaleX(1.0982);transform-origin:100% 0'>2766738</div>
<div class='t' style='right:317px;top:306.43px;transform:scaleX(1.0982);transform-origin:100% 0'>2766738</div>
<div class='t' style='right:179px;top:306.43px;transform:scaleX(1.0982);transform-origin:100% 0'>0</div>
<div class='t' style='right:10px;top:306.43px;transform:scaleX(1.0982);transform-origin:100% 0'>345923.6742</div>
<div class='rn' style='right:1530px;top:336.43px;transform:scaleX(1.1767);transform-origin:100% 0'>11</div>
<div class='t na' style='right:1455px;top:336.43px;transform:scaleX(0.9896);transform-origin:100% 0'>NA</div>
<div class='t na' style='left:124.5px;top:336.43px;transform:scaleX(0.9896);transform-origin:0 0'>NA</div>
<div class='t' style='left:192.5px;top:336.43px;transform:scaleX(1.1061);transform-origin:0 0'>18 to under 25</div>
<div class='t na' style='left:312.5px;top:336.43px;transform:scaleX(0.9896);transform-origin:0 0'>NA</div>
<div class='t' style='left:450.5px;top:336.43px;transform:scaleX(1.0718);transform-origin:0 0'>age</div>
<div class='t' style='right:853px;top:336.43px;transform:scaleX(1.0982);transform-origin:100% 0'>4</div>
<div class='t' style='right:759px;top:336.43px;transform:scaleX(1.0982);transform-origin:100% 0'>1</div>
<div class='t' style='right:621px;top:336.43px;transform:scaleX(1.1196);transform-origin:100% 0'>1291175</div>
<div class='t' style='right:453px;top:336.43px;transform:scaleX(1.0982);transform-origin:100% 0'>1313746</div>
<div class='t' style='right:317px;top:336.43px;transform:scaleX(1.0982);transform-origin:100% 0'>1313746</div>
<div class='t' style='right:179px;top:336.43px;transform:scaleX(1.0982);transform-origin:100% 0'>807254074</div>
<div class='t' style='right:10px;top:336.43px;transform:scaleX(1.0982);transform-origin:100% 0'>164083.2516</div>
<div class='rn' style='right:1530px;top:366.43px;transform:scaleX(1.0982);transform-origin:100% 0'>12</div>
<div class='t na' style='right:1455px;top:366.43px;transform:scaleX(0.9896);transform-origin:100% 0'>NA</div>
<div class='t na' style='left:124.5px;top:366.43px;transform:scaleX(0.9896);transform-origin:0 0'>NA</div>
<div class='t' style='left:192.5px;top:366.43px;transform:scaleX(1.1061);transform-origin:0 0'>25 to under 55</div>
<div class='t na' style='left:312.5px;top:366.43px;transform:scaleX(0.9896);transform-origin:0 0'>NA</div>
<div class='t' style='left:450.5px;top:366.43px;transform:scaleX(1.0718);transform-origin:0 0'>age</div>
<div class='t' style='right:853px;top:366.43px;transform:scaleX(1.0982);transform-origin:100% 0'>4</div>
<div class='t' style='right:759px;top:366.43px;transform:scaleX(1.0982);transform-origin:100% 0'>1</div>
<div class='t' style='right:621px;top:366.43px;transform:scaleX(1.0982);transform-origin:100% 0'>1828488</div>
<div class='t' style='right:453px;top:366.43px;transform:scaleX(1.0982);transform-origin:100% 0'>1860279</div>
<div class='t' style='right:317px;top:366.43px;transform:scaleX(1.0982);transform-origin:100% 0'>1860279</div>
<div class='t' style='right:179px;top:366.43px;transform:scaleX(1.1131);transform-origin:100% 0'>1142574613</div>
<div class='t' style='right:10px;top:366.43px;transform:scaleX(1.0982);transform-origin:100% 0'>232795.2784</div>
<div class='rn' style='right:1530px;top:396.43px;transform:scaleX(1.0982);transform-origin:100% 0'>13</div>
<div class='t na' style='right:1455px;top:396.43px;transform:scaleX(0.9896);transform-origin:100% 0'>NA</div>
<div class='t na' style='left:124.5px;top:396.43px;transform:scaleX(0.9896);transform-origin:0 0'>NA</div>
<div class='t' style='left:192.5px;top:396.43px;transform:scaleX(1.1061);transform-origin:0 0'>55 to under 65</div>
<div class='t na' style='left:312.5px;top:396.43px;transform:scaleX(0.9896);transform-origin:0 0'>NA</div>
<div class='t' style='left:450.5px;top:396.43px;transform:scaleX(1.0718);transform-origin:0 0'>age</div>
<div class='t' style='right:853px;top:396.43px;transform:scaleX(1.0982);transform-origin:100% 0'>4</div>
<div class='t' style='right:759px;top:396.43px;transform:scaleX(1.0982);transform-origin:100% 0'>1</div>
<div class='t' style='right:621px;top:396.43px;transform:scaleX(1.0982);transform-origin:100% 0'>836803</div>
<div class='t' style='right:453px;top:396.43px;transform:scaleX(1.0982);transform-origin:100% 0'>851389</div>
<div class='t' style='right:317px;top:396.43px;transform:scaleX(1.0982);transform-origin:100% 0'>851389</div>
<div class='rn' style='right:1530px;top:426.43px;transform:scaleX(1.0982);transform-origin:100% 0'>14</div>
<div class='t na' style='right:1455px;top:426.43px;transform:scaleX(0.9896);transform-origin:100% 0'>NA</div>
<div class='t na' style='left:124.5px;top:426.43px;transform:scaleX(0.9896);transform-origin:0 0'>NA</div>
<div class='t' style='left:192.5px;top:426.43px;transform:scaleX(1.0947);transform-origin:0 0'>65 and older</div>
<div class='t na' style='left:312.5px;top:426.43px;transform:scaleX(0.9896);transform-origin:0 0'>NA</div>
<div class='t' style='left:450.5px;top:426.43px;transform:scaleX(1.0718);transform-origin:0 0'>age</div>
<div class='t' style='right:853px;top:426.43px;transform:scaleX(1.0982);transform-origin:100% 0'>4</div>
<div class='t' style='right:759px;top:426.43px;transform:scaleX(1.0982);transform-origin:100% 0'>1</div>
<div class='t' style='right:621px;top:426.43px;transform:scaleX(1.0982);transform-origin:100% 0'>2932427</div>
<div class='rn' style='right:1530px;top:456.43px;transform:scaleX(1.0982);transform-origin:100% 0'>15</div>
<div class='t na' style='right:1455px;top:456.43px;transform:scaleX(0.9896);transform-origin:100% 0'>NA</div>
<div class='t na' style='left:124.5px;top:456.43px;transform:scaleX(0.9896);transform-origin:0 0'>NA</div>
<div class='t na' style='left:192.5px;top:456.43px;transform:scaleX(0.9896);transform-origin:0 0'>NA</div>
<div class='t na' style='left:312.5px;top:456.43px;transform:scaleX(0.9896);transform-origin:0 0'>NA</div>
<div class='t' style='left:450.5px;top:456.43px;transform:scaleX(1.0718);transform-origin:0 0'>age</div>
<div class='t' style='right:853px;top:456.43px;transform:scaleX(1.0982);transform-origin:100% 0'>4</div>
<div class='t' style='right:759px;top:456.43px;transform:scaleX(1.0982);transform-origin:100% 0'>1</div>
<div class='t' style='right:621px;top:456.43px;transform:scaleX(1.0982);transform-origin:100% 0'>0</div>
<div class='rn' style='right:1530px;top:486.43px;transform:scaleX(1.0982);transform-origin:100% 0'>16</div>
<div class='t na' style='right:1455px;top:486.43px;transform:scaleX(0.9896);transform-origin:100% 0'>NA</div>
<div class='t na' style='left:124.5px;top:486.43px;transform:scaleX(0.9896);transform-origin:0 0'>NA</div>
<div class='t na' style='left:192.5px;top:486.43px;transform:scaleX(0.9896);transform-origin:0 0'>NA</div>
<div class='t' style='left:312.5px;top:486.43px;transform:scaleX(1.0614);transform-origin:0 0'>Total</div>
<div class='t' style='left:450.5px;top:486.43px;transform:scaleX(1.0983);transform-origin:0 0'>education</div>
<div class='t' style='right:853px;top:486.43px;transform:scaleX(1.0982);transform-origin:100% 0'>5</div>
<div class='t' style='right:759px;top:486.43px;transform:scaleX(1.0982);transform-origin:100% 0'>1</div>
<div class='t' style='right:621px;top:486.43px;transform:scaleX(1.0982);transform-origin:100% 0'>9153171</div>
<div class='rn' style='right:1530px;top:516.42px;transform:scaleX(1.0982);transform-origin:100% 0'>17</div>
<div class='t na' style='right:1455px;top:516.42px;transform:scaleX(0.9896);transform-origin:100% 0'>NA</div>
<div class='t na' style='left:124.5px;top:516.42px;transform:scaleX(0.9896);transform-origin:0 0'>NA</div>
<div class='t na' style='left:192.5px;top:516.42px;transform:scaleX(0.9896);transform-origin:0 0'>NA</div>
<div class='t' style='left:312.5px;top:516.42px;transform:scaleX(1.0969);transform-origin:0 0'>low education</div>
<div class='t' style='left:450.5px;top:516.42px;transform:scaleX(1.0983);transform-origin:0 0'>education</div>
<div class='t' style='right:853px;top:516.42px;transform:scaleX(1.0982);transform-origin:100% 0'>5</div>
<div class='t' style='right:759px;top:516.42px;transform:scaleX(1.0982);transform-origin:100% 0'>1</div>
<div class='t' style='right:621px;top:516.42px;transform:scaleX(1.0982);transform-origin:100% 0'>3050597</div>
<div class='rn' style='right:1530px;top:545.42px;transform:scaleX(1.0982);transform-origin:100% 0'>18</div>
<div class='t na' style='right:1455px;top:545.42px;transform:scaleX(0.9896);transform-origin:100% 0'>NA</div>
<div class='t na' style='left:124.5px;top:545.42px;transform:scaleX(0.9896);transform-origin:0 0'>NA</div>
<div class='t na' style='left:192.5px;top:545.42px;transform:scaleX(0.9896);transform-origin:0 0'>NA</div>
<div class='t' style='left:312.5px;top:545.42px;transform:scaleX(1.1039);transform-origin:0 0'>middle education</div>
<div class='t' style='left:450.5px;top:545.42px;transform:scaleX(1.0983);transform-origin:0 0'>education</div>
<div class='t' style='right:853px;top:545.42px;transform:scaleX(1.0982);transform-origin:100% 0'>5</div>
<div class='t' style='right:759px;top:545.42px;transform:scaleX(1.0982);transform-origin:100% 0'>1</div>
<div class='t' style='right:621px;top:545.42px;transform:scaleX(1.0982);transform-origin:100% 0'>3052256</div>
<div class='rn' style='right:1530px;top:575.42px;transform:scaleX(1.0982);transform-origin:100% 0'>19</div>
<div class='t na' style='right:1455px;top:575.42px;transform:scaleX(0.9896);transform-origin:100% 0'>NA</div>
<div class='t na' style='left:124.5px;top:575.42px;transform:scaleX(0.9896);transform-origin:0 0'>NA</div>
<div class='t na' style='left:192.5px;top:575.42px;transform:scaleX(0.9896);transform-origin:0 0'>NA</div>
<div class='t' style='left:312.5px;top:575.42px;transform:scaleX(1.1009);transform-origin:0 0'>high education</div>
<div class='t' style='left:450.5px;top:575.42px;transform:scaleX(1.0983);transform-origin:0 0'>education</div>
<div class='t' style='right:853px;top:575.42px;transform:scaleX(1.0982);transform-origin:100% 0'>5</div>
<div class='t' style='right:759px;top:575.42px;transform:scaleX(1.0982);transform-origin:100% 0'>1</div>
<div class='t' style='right:621px;top:575.42px;transform:scaleX(1.0982);transform-origin:100% 0'>3050318</div>
<div class='rn' style='right:1530px;top:605.42px;transform:scaleX(1.0982);transform-origin:100% 0'>20</div>
<div class='t na' style='right:1455px;top:605.42px;transform:scaleX(0.9896);transform-origin:100% 0'>NA</div>
<div class='t na' style='left:124.5px;top:605.42px;transform:scaleX(0.9896);transform-origin:0 0'>NA</div>
<div class='t na' style='left:192.5px;top:605.42px;transform:scaleX(0.9896);transform-origin:0 0'>NA</div>
<div class='t na' style='left:312.5px;top:605.42px;transform:scaleX(0.9896);transform-origin:0 0'>NA</div>
<div class='t' style='left:450.5px;top:605.42px;transform:scaleX(1.0983);transform-origin:0 0'>education</div>
<div class='t' style='right:853px;top:605.42px;transform:scaleX(1.0982);transform-origin:100% 0'>5</div>
<div class='t' style='right:759px;top:605.42px;transform:scaleX(1.0982);transform-origin:100% 0'>1</div>
<div class='t' style='right:621px;top:605.42px;transform:scaleX(1.0982);transform-origin:100% 0'>454926</div>
<div class='rn' style='right:1530px;top:635.42px;transform:scaleX(1.0982);transform-origin:100% 0'>21</div>
<div class='t' style='right:1455px;top:635.42px;transform:scaleX(1.0982);transform-origin:100% 0'>2023</div>
<div class='t' style='left:124.5px;top:635.42px;transform:scaleX(1.0614);transform-origin:0 0'>Total</div>
<div class='t na' style='left:192.5px;top:635.42px;transform:scaleX(0.9896);transform-origin:0 0'>NA</div>
<div class='t na' style='left:312.5px;top:635.42px;transform:scaleX(0.9896);transform-origin:0 0'>NA</div>
<div class='t' style='left:450.5px;top:635.42px;transform:scaleX(1.1230);transform-origin:0 0'>year+sex</div>
<div class='t' style='right:853px;top:635.42px;transform:scaleX(1.0982);transform-origin:100% 0'>6</div>
<div class='t' style='right:759px;top:635.42px;transform:scaleX(1.0982);transform-origin:100% 0'>2</div>
<div class='t' style='right:621px;top:635.42px;transform:scaleX(1.0982);transform-origin:100% 0'>3287019</div>
<div class='rn' style='right:1530px;top:665.42px;transform:scaleX(1.0982);transform-origin:100% 0'>22</div>
<div class='t' style='right:1455px;top:665.42px;transform:scaleX(1.0982);transform-origin:100% 0'>2023</div>
<div class='t' style='left:124.5px;top:665.42px;transform:scaleX(1.0491);transform-origin:0 0'>Male</div>
<div class='t na' style='left:192.5px;top:665.42px;transform:scaleX(0.9896);transform-origin:0 0'>NA</div>
<div class='t na' style='left:312.5px;top:665.42px;transform:scaleX(0.9896);transform-origin:0 0'>NA</div>
<div class='t' style='left:450.5px;top:665.42px;transform:scaleX(1.1230);transform-origin:0 0'>year+sex</div>
<div class='t' style='right:853px;top:665.42px;transform:scaleX(1.0982);transform-origin:100% 0'>6</div>
<div class='t' style='right:759px;top:665.42px;transform:scaleX(1.0982);transform-origin:100% 0'>2</div>
<div class='t' style='right:621px;top:665.42px;transform:scaleX(1.1196);transform-origin:100% 0'>1643115</div>
<div class='rn' style='right:1530px;top:695.42px;transform:scaleX(1.0982);transform-origin:100% 0'>23</div>
<div class='t' style='right:1455px;top:695.42px;transform:scaleX(1.0982);transform-origin:100% 0'>2023</div>
<div class='t' style='left:124.5px;top:695.42px;transform:scaleX(1.0409);transform-origin:0 0'>Female</div>
<div class='t na' style='left:192.5px;top:695.42px;transform:scaleX(0.9896);transform-origin:0 0'>NA</div>
<div class='t na' style='left:312.5px;top:695.42px;transform:scaleX(0.9896);transform-origin:0 0'>NA</div>
<div class='t' style='left:450.5px;top:695.42px;transform:scaleX(1.1230);transform-origin:0 0'>year+sex</div>
<div class='t' style='right:853px;top:695.42px;transform:scaleX(1.0982);transform-origin:100% 0'>6</div>
<div class='t' style='right:759px;top:695.42px;transform:scaleX(1.0982);transform-origin:100% 0'>2</div>
<div class='t' style='right:621px;top:695.42px;transform:scaleX(1.0982);transform-origin:100% 0'>1643904</div>
<div class='rn' style='right:1530px;top:725.42px;transform:scaleX(1.0982);transform-origin:100% 0'>24</div>
<div class='t' style='right:1455px;top:725.42px;transform:scaleX(1.0982);transform-origin:100% 0'>2023</div>
<div class='t na' style='left:124.5px;top:725.42px;transform:scaleX(0.9896);transform-origin:0 0'>NA</div>
<div class='t na' style='left:192.5px;top:725.42px;transform:scaleX(0.9896);transform-origin:0 0'>NA</div>
<div class='t na' style='left:312.5px;top:725.42px;transform:scaleX(0.9896);transform-origin:0 0'>NA</div>
<div class='t' style='left:450.5px;top:725.42px;transform:scaleX(1.1230);transform-origin:0 0'>year+sex</div>
<div class='t' style='right:853px;top:725.42px;transform:scaleX(1.0982);transform-origin:100% 0'>6</div>
<div class='t' style='right:759px;top:725.42px;transform:scaleX(1.0982);transform-origin:100% 0'>2</div>
<div class='t' style='right:621px;top:725.42px;transform:scaleX(1.0982);transform-origin:100% 0'>74138</div>
<div class='rn' style='right:1530px;top:755.42px;transform:scaleX(1.0982);transform-origin:100% 0'>25</div>
<div class='t' style='right:1455px;top:755.42px;transform:scaleX(1.0982);transform-origin:100% 0'>2024</div>
<div class='t' style='left:124.5px;top:755.42px;transform:scaleX(1.0614);transform-origin:0 0'>Total</div>
<div class='t na' style='left:192.5px;top:755.42px;transform:scaleX(0.9896);transform-origin:0 0'>NA</div>
<div class='t na' style='left:312.5px;top:755.42px;transform:scaleX(0.9896);transform-origin:0 0'>NA</div>
<div class='t' style='left:450.5px;top:755.42px;transform:scaleX(1.1230);transform-origin:0 0'>year+sex</div>
<div class='t' style='right:853px;top:755.42px;transform:scaleX(1.0982);transform-origin:100% 0'>6</div>
<div class='t' style='right:759px;top:755.42px;transform:scaleX(1.0982);transform-origin:100% 0'>2</div>
<div class='t' style='right:621px;top:755.42px;transform:scaleX(1.0982);transform-origin:100% 0'>3287776</div>
<div class='rn' style='right:1530px;top:785.42px;transform:scaleX(1.0982);transform-origin:100% 0'>26</div>
<div class='t' style='right:1455px;top:785.42px;transform:scaleX(1.0982);transform-origin:100% 0'>2024</div>
<div class='t' style='left:124.5px;top:785.42px;transform:scaleX(1.0491);transform-origin:0 0'>Male</div>
<div class='t na' style='left:192.5px;top:785.42px;transform:scaleX(0.9896);transform-origin:0 0'>NA</div>
<div class='t na' style='left:312.5px;top:785.42px;transform:scaleX(0.9896);transform-origin:0 0'>NA</div>
<div class='t' style='left:450.5px;top:785.42px;transform:scaleX(1.1230);transform-origin:0 0'>year+sex</div>
<div class='t' style='right:853px;top:785.42px;transform:scaleX(1.0982);transform-origin:100% 0'>6</div>
<div class='t' style='right:759px;top:785.42px;transform:scaleX(1.0982);transform-origin:100% 0'>2</div>
<div class='t' style='right:621px;top:785.42px;transform:scaleX(1.0982);transform-origin:100% 0'>1644179</div>
<div class='rn' style='right:1530px;top:815.42px;transform:scaleX(1.0982);transform-origin:100% 0'>27</div>
<div class='t' style='right:1455px;top:815.42px;transform:scaleX(1.0982);transform-origin:100% 0'>2024</div>
<div class='t' style='left:124.5px;top:815.42px;transform:scaleX(1.0409);transform-origin:0 0'>Female</div>
<div class='t na' style='left:192.5px;top:815.42px;transform:scaleX(0.9896);transform-origin:0 0'>NA</div>
<div class='t na' style='left:312.5px;top:815.42px;transform:scaleX(0.9896);transform-origin:0 0'>NA</div>
<div class='t' style='left:450.5px;top:815.42px;transform:scaleX(1.1230);transform-origin:0 0'>year+sex</div>
<div class='t' style='right:853px;top:815.42px;transform:scaleX(1.0982);transform-origin:100% 0'>6</div>
<div class='t' style='right:759px;top:815.42px;transform:scaleX(1.0982);transform-origin:100% 0'>2</div>
<div class='t' style='right:621px;top:815.42px;transform:scaleX(1.0982);transform-origin:100% 0'>1643597</div>
<div class='rn' style='right:1530px;top:844.42px;transform:scaleX(1.0982);transform-origin:100% 0'>28</div>
<div class='t' style='right:1455px;top:844.42px;transform:scaleX(1.0982);transform-origin:100% 0'>2024</div>
<div class='t na' style='left:124.5px;top:844.42px;transform:scaleX(0.9896);transform-origin:0 0'>NA</div>
<div class='t na' style='left:192.5px;top:844.42px;transform:scaleX(0.9896);transform-origin:0 0'>NA</div>
<div class='t na' style='left:312.5px;top:844.42px;transform:scaleX(0.9896);transform-origin:0 0'>NA</div>
<div class='t' style='left:450.5px;top:844.42px;transform:scaleX(1.1230);transform-origin:0 0'>year+sex</div>
<div class='t' style='right:853px;top:844.42px;transform:scaleX(1.0982);transform-origin:100% 0'>6</div>
<div class='t' style='right:759px;top:844.42px;transform:scaleX(1.0982);transform-origin:100% 0'>2</div>
<div class='t' style='right:621px;top:844.42px;transform:scaleX(1.0982);transform-origin:100% 0'>74026</div>
<div class='con'><div class='cin'></div>
<div class='cl' style='left:9.200000000000045px;top:13.91px;transform:scaleX(1);transform-origin:0 0'> &gt; Executing merge:</div>
<div class='cl' style='left:9.200000000000045px;top:34.68px;transform:scaleX(1);transform-origin:0 0'>   + total</div>
<div class='cl' style='left:9.200000000000045px;top:76.22px;transform:scaleX(1);transform-origin:0 0'> &gt; Executing combination merge:</div>
<div class='cl' style='left:9.200000000000045px;top:96.99px;transform:scaleX(1);transform-origin:0 0'>   + year</div>
<div class='cl' style='left:9.200000000000045px;top:117.76px;transform:scaleX(1);transform-origin:0 0'>   + sex</div>
<div class='cl' style='left:9.200000000000045px;top:138.53px;transform:scaleX(1);transform-origin:0 0'>   + age</div>
<div class='cl' style='left:9.200000000000045px;top:159.30px;transform:scaleX(1);transform-origin:0 0'>   + education</div>
<div class='cl' style='left:9.200000000000045px;top:180.07px;transform:scaleX(1);transform-origin:0 0'>   + year + sex</div>
<div class='cl' style='left:9.200000000000045px;top:200.84px;transform:scaleX(1);transform-origin:0 0'>   + year + age</div>
<div class='cl' style='left:9.200000000000045px;top:221.61px;transform:scaleX(1);transform-origin:0 0'>   + year + education</div>
<div class='cl' style='left:9.200000000000045px;top:242.38px;transform:scaleX(1);transform-origin:0 0'>   + sex + age</div>
<div class='cl' style='left:9.200000000000045px;top:263.15px;transform:scaleX(1);transform-origin:0 0'>   + sex + education</div>
<div class='cl' style='left:9.200000000000045px;top:283.92px;transform:scaleX(1);transform-origin:0 0'>   + age + education</div>
<div class='cl' style='left:9.200000000000045px;top:304.69px;transform:scaleX(1);transform-origin:0 0'>   + year + sex + age</div>
<div class='cl' style='left:9.200000000000045px;top:325.46px;transform:scaleX(1);transform-origin:0 0'>   + year + sex + education</div>
<div class='cl' style='left:9.200000000000045px;top:346.23px;transform:scaleX(1);transform-origin:0 0'>   + year + age + education</div>
<div class='cl' style='left:9.200000000000045px;top:367.00px;transform:scaleX(1);transform-origin:0 0'>   + sex + age + education</div>
<div class='cl' style='left:9.200000000000045px;top:387.77px;transform:scaleX(1);transform-origin:0 0'>   + year + sex + age + education</div>
<div class='cl' style='left:9.200000000000045px;top:429.31px;transform:scaleX(1);transform-origin:0 0'> &gt; Putting results together.</div>
<div class='cl' style='left:9.200000000000045px;top:470.85px;transform:scaleX(1);transform-origin:0 0'>      &#x27;summarise_plus&#x27; execution time: 1.031 seconds</div>
<div class='r' style='left:10.399999999999977px;top:477.6px;width:8.5px;height:1.6px;background:#f0f0f0'></div>
<div class='r' style='left:31.399999999999977px;top:477.6px;width:8.5px;height:1.6px;background:#f0f0f0'></div>
<div class='r' style='left:52.40000000000009px;top:477.6px;width:8.5px;height:1.6px;background:#f0f0f0'></div>
<div class='r' style='left:0;top:0;right:0;height:1px;background:#f9eebd'></div>
<div class='r' style='left:5px;top:8px;right:8px;height:1px;background:#f9eebd'></div>
<div class='r' style='left:5px;top:9px;right:8px;height:1px;background:#2c2c2c'></div>
</div>
</body></html>
